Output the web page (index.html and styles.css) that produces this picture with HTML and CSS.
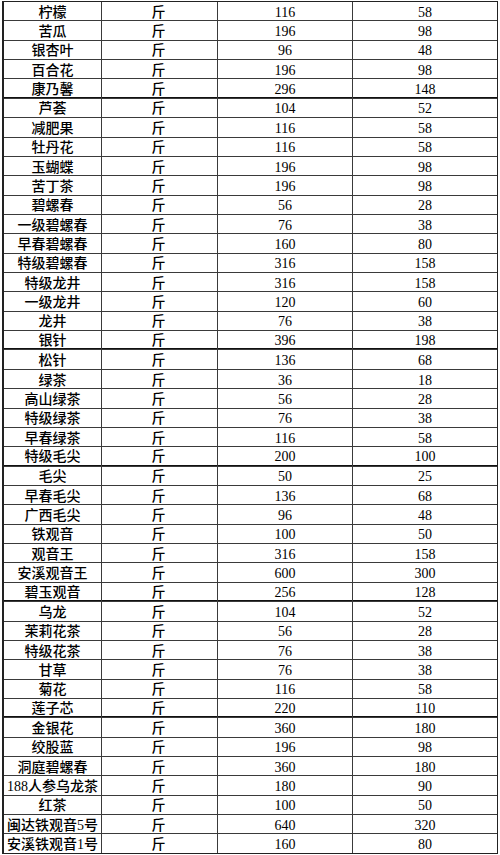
FILE: index.html
```html
<!DOCTYPE html>
<html lang="zh">
<head>
<meta charset="utf-8">
<link rel="stylesheet" href="styles.css">
</head>
<body>
<div class="price-table">
<div class="row"><div class="name">柠檬</div><div class="unit">斤</div><div class="num">116</div><div class="num">58</div></div>
<div class="row"><div class="name">苦瓜</div><div class="unit">斤</div><div class="num">196</div><div class="num">98</div></div>
<div class="row"><div class="name">银杏叶</div><div class="unit">斤</div><div class="num">96</div><div class="num">48</div></div>
<div class="row"><div class="name">百合花</div><div class="unit">斤</div><div class="num">196</div><div class="num">98</div></div>
<div class="row sep"><div class="name">康乃馨</div><div class="unit">斤</div><div class="num">296</div><div class="num">148</div></div>
<div class="row"><div class="name">芦荟</div><div class="unit">斤</div><div class="num">104</div><div class="num">52</div></div>
<div class="row"><div class="name">减肥果</div><div class="unit">斤</div><div class="num">116</div><div class="num">58</div></div>
<div class="row"><div class="name">牡丹花</div><div class="unit">斤</div><div class="num">116</div><div class="num">58</div></div>
<div class="row"><div class="name">玉蝴蝶</div><div class="unit">斤</div><div class="num">196</div><div class="num">98</div></div>
<div class="row"><div class="name">苦丁茶</div><div class="unit">斤</div><div class="num">196</div><div class="num">98</div></div>
<div class="row"><div class="name">碧螺春</div><div class="unit">斤</div><div class="num">56</div><div class="num">28</div></div>
<div class="row"><div class="name">一级碧螺春</div><div class="unit">斤</div><div class="num">76</div><div class="num">38</div></div>
<div class="row"><div class="name">早春碧螺春</div><div class="unit">斤</div><div class="num">160</div><div class="num">80</div></div>
<div class="row"><div class="name">特级碧螺春</div><div class="unit">斤</div><div class="num">316</div><div class="num">158</div></div>
<div class="row"><div class="name">特级龙井</div><div class="unit">斤</div><div class="num">316</div><div class="num">158</div></div>
<div class="row"><div class="name">一级龙井</div><div class="unit">斤</div><div class="num">120</div><div class="num">60</div></div>
<div class="row"><div class="name">龙井</div><div class="unit">斤</div><div class="num">76</div><div class="num">38</div></div>
<div class="row sep"><div class="name">银针</div><div class="unit">斤</div><div class="num">396</div><div class="num">198</div></div>
<div class="row"><div class="name">松针</div><div class="unit">斤</div><div class="num">136</div><div class="num">68</div></div>
<div class="row"><div class="name">绿茶</div><div class="unit">斤</div><div class="num">36</div><div class="num">18</div></div>
<div class="row"><div class="name">高山绿茶</div><div class="unit">斤</div><div class="num">56</div><div class="num">28</div></div>
<div class="row"><div class="name">特级绿茶</div><div class="unit">斤</div><div class="num">76</div><div class="num">38</div></div>
<div class="row"><div class="name">早春绿茶</div><div class="unit">斤</div><div class="num">116</div><div class="num">58</div></div>
<div class="row sep"><div class="name">特级毛尖</div><div class="unit">斤</div><div class="num">200</div><div class="num">100</div></div>
<div class="row"><div class="name">毛尖</div><div class="unit">斤</div><div class="num">50</div><div class="num">25</div></div>
<div class="row"><div class="name">早春毛尖</div><div class="unit">斤</div><div class="num">136</div><div class="num">68</div></div>
<div class="row"><div class="name">广西毛尖</div><div class="unit">斤</div><div class="num">96</div><div class="num">48</div></div>
<div class="row"><div class="name">铁观音</div><div class="unit">斤</div><div class="num">100</div><div class="num">50</div></div>
<div class="row"><div class="name">观音王</div><div class="unit">斤</div><div class="num">316</div><div class="num">158</div></div>
<div class="row"><div class="name">安溪观音王</div><div class="unit">斤</div><div class="num">600</div><div class="num">300</div></div>
<div class="row sep"><div class="name">碧玉观音</div><div class="unit">斤</div><div class="num">256</div><div class="num">128</div></div>
<div class="row"><div class="name">乌龙</div><div class="unit">斤</div><div class="num">104</div><div class="num">52</div></div>
<div class="row"><div class="name">茉莉花茶</div><div class="unit">斤</div><div class="num">56</div><div class="num">28</div></div>
<div class="row"><div class="name">特级花茶</div><div class="unit">斤</div><div class="num">76</div><div class="num">38</div></div>
<div class="row"><div class="name">甘草</div><div class="unit">斤</div><div class="num">76</div><div class="num">38</div></div>
<div class="row"><div class="name">菊花</div><div class="unit">斤</div><div class="num">116</div><div class="num">58</div></div>
<div class="row sep"><div class="name">莲子芯</div><div class="unit">斤</div><div class="num">220</div><div class="num">110</div></div>
<div class="row"><div class="name">金银花</div><div class="unit">斤</div><div class="num">360</div><div class="num">180</div></div>
<div class="row"><div class="name">绞股蓝</div><div class="unit">斤</div><div class="num">196</div><div class="num">98</div></div>
<div class="row"><div class="name">洞庭碧螺春</div><div class="unit">斤</div><div class="num">360</div><div class="num">180</div></div>
<div class="row"><div class="name">188人参乌龙茶</div><div class="unit">斤</div><div class="num">180</div><div class="num">90</div></div>
<div class="row"><div class="name">红茶</div><div class="unit">斤</div><div class="num">100</div><div class="num">50</div></div>
<div class="row"><div class="name">闽达铁观音5号</div><div class="unit">斤</div><div class="num">640</div><div class="num">320</div></div>
<div class="row"><div class="name">安溪铁观音1号</div><div class="unit">斤</div><div class="num">160</div><div class="num">80</div></div>
</div>
</body>
</html>
```
FILE: styles.css
```css
html, body {
  margin: 0;
  padding: 0;
  background: #ffffff;
}
body {
  padding: 1px 0 0 2px;
}
.price-table {
  width: 496px;
  box-sizing: border-box;
  display: grid;
  grid-template-columns: 97px 115px 134px 144px;
  grid-auto-rows: 18.36px;
  gap: 1px;
  background: #3a3a3a;
  border: 1px solid #222222;
  border-left-width: 2px;
  font-family: "Liberation Serif", "Noto Sans CJK SC", serif;
  font-size: 14px;
  color: #000000;
}
.row {
  display: contents;
}
.row > div {
  background: #ffffff;
  display: flex;
  align-items: center;
  justify-content: center;
  white-space: nowrap;
  overflow: hidden;
  line-height: 1;
  box-sizing: border-box;
  padding-top: 3px;
}
.name {
  font-weight: 500;
}
.unit {
  font-weight: 500;
  padding-right: 2px;
}
.num {
  font-weight: 400;
}
.row.sep > div {
  border-bottom: 1px solid #111111;
}
```
